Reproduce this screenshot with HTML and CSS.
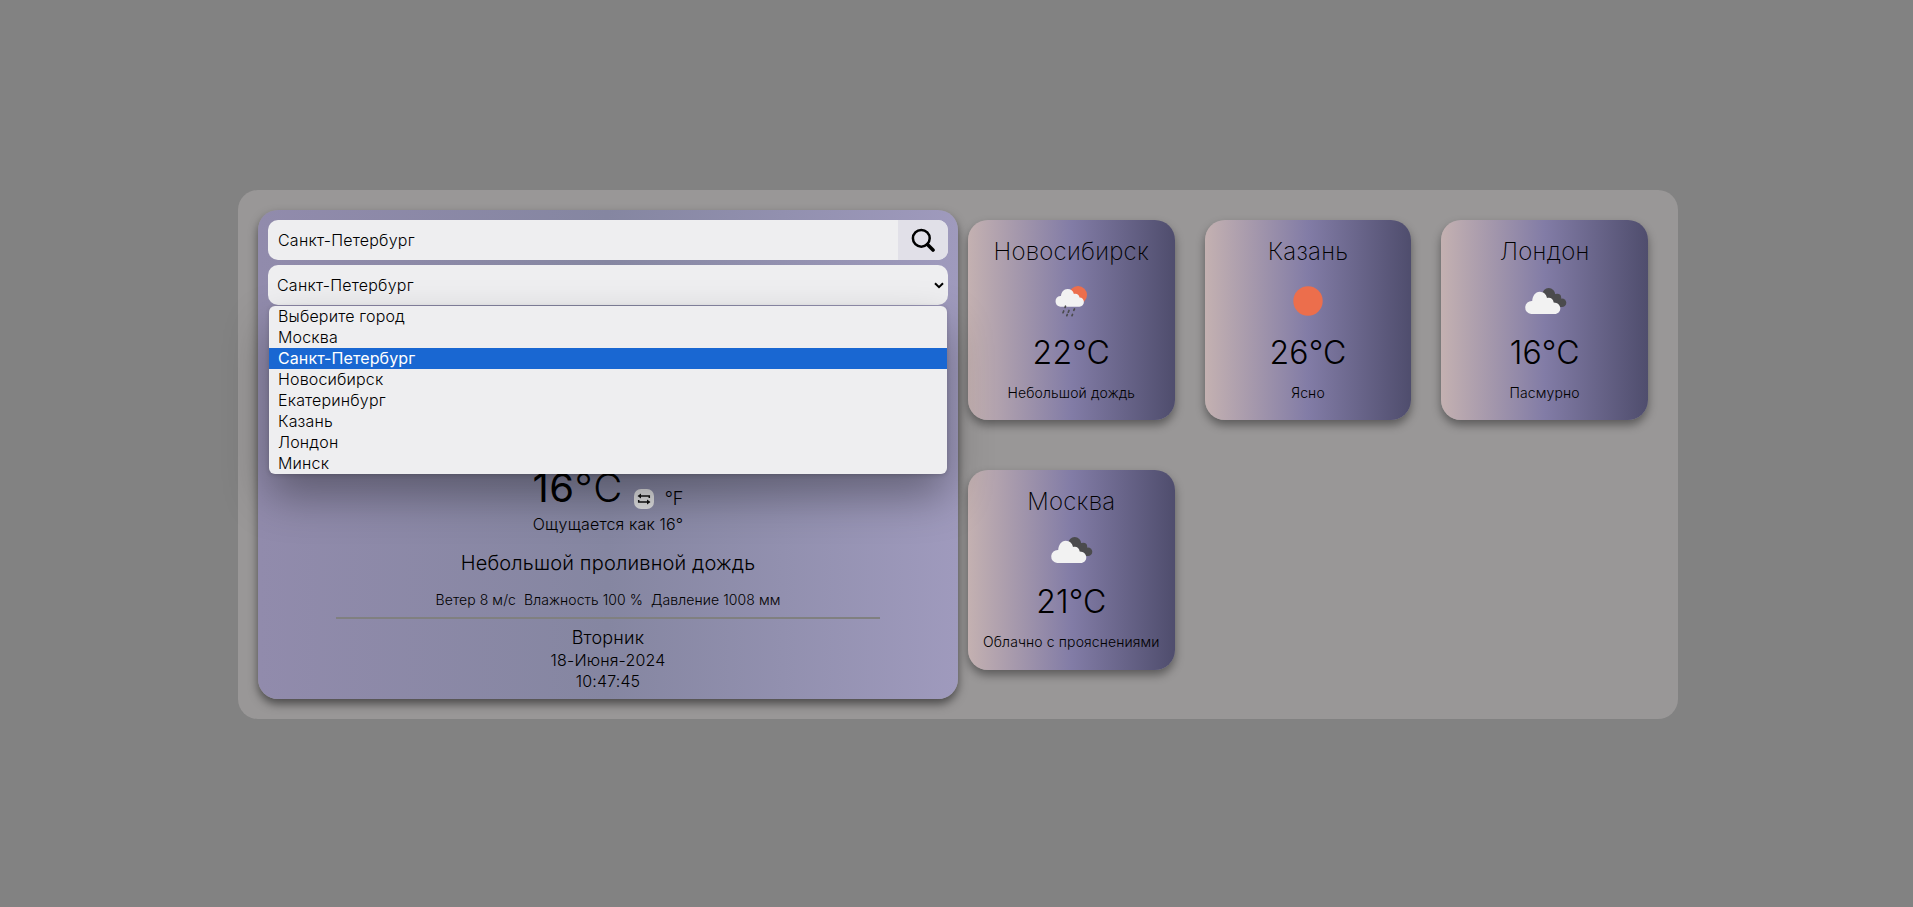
FILE: index.html
```html
<!DOCTYPE html>
<html lang="ru">
<head>
<meta charset="utf-8">
<title>Погода</title>
<link rel="stylesheet" href="styles.css">
</head>
<body>
<svg class="sprite" width="0" height="0">
  <symbol id="overcast" viewBox="0 0 48 48">
    <g fill="#4b4b4d"><circle cx="27.700" cy="17.500" r="6.500"/><circle cx="36.200" cy="20.700" r="4"/><circle cx="41" cy="25.700" r="4.300"/><path d="M24 20h12l5 10H30z"/></g>
    <path fill="#f2f2f2" d="M10.200 37a6.500 6.500 0 0 1 1-13c.3-4.700 3-9.200 7.500-9.200 4 0 6.700 2.800 7.300 6.300 3.200-1.300 6.200.8 6.700 4.400 4 .3 6.600 2.500 6.600 6 0 3-2.500 5.500-5.500 5.500z"/>
  </symbol>
  <symbol id="rain-sun" viewBox="0 0 48 48">
    <circle cx="31" cy="18" r="9" fill="#ec6e4c"/>
    <path fill="#f2f2f2" d="M13.300 29.800a5.500 5.500 0 0 1 0-10.900h.7c.3-3.900 2.900-6.900 6.500-6.900 3.200 0 5.700 1.800 6.400 5 2.700-.9 5.200.7 5.700 3.400 2.500 0 4.300 2 4.300 4.700s-1.900 4.700-4.500 4.700z"/>
    <g stroke="#4b4b4d" stroke-width="1.700" stroke-linecap="round"><path d="M18.500 29.200l-.4 1.200M16.700 34l-.7 1.700M22 33.500l-.7 1.700M27.500 31.900l-.7 1.400M20.300 37.500l-.5 1.200M25.500 37.500l-.5 1.200"/></g>
  </symbol>
  <symbol id="clear" viewBox="0 0 48 48"><circle cx="24" cy="24" r="14.700" fill="#ec6e4c"/></symbol>
</svg>
<main class="app">
  <section class="current">
    <form class="search">
      <span class="search-text">Санкт-Петербург</span>
      <button class="search-button" type="button" aria-label="Поиск">
        <svg width="24" height="24" viewBox="0 0 24 24" fill="none" stroke="#000"><circle cx="10.300" cy="10.300" r="8.400" stroke-width="2.500"/><path d="M16.500 16.500l5.500 5.500" stroke-width="3.600" stroke-linecap="round"/></svg>
      </button>
    </form>
    <div class="select">
      <span>Санкт-Петербург</span>
      <svg width="10" height="7" viewBox="0 0 10 7" fill="none" stroke="#000" stroke-width="2"><path d="M1 1.200l4 4 4-4"/></svg>
      <ul class="options">
        <li>Выберите город</li>
        <li>Москва</li>
        <li class="selected">Санкт-Петербург</li>
        <li>Новосибирск</li>
        <li>Екатеринбург</li>
        <li>Казань</li>
        <li>Лондон</li>
        <li>Минск</li>
      </ul>
    </div>
    <div class="weather">
      <div class="temperature">
        <span class="degrees">16</span><span class="unit">°C</span>
        <span class="swap"><svg width="14" height="12" viewBox="0 0 14 12" fill="none" stroke="#111" stroke-width="1.500"><path d="M12.300 5V3H2M1.700 7v2H12"/><path d="M4 .4L.5 3 4 5.600zM10 6.400L13.500 9 10 11.600z" fill="#111" stroke="none"/></svg></span>
        <span class="other-unit">°F</span>
      </div>
      <div class="feels">Ощущается как 16°</div>
      <div class="condition">Небольшой проливной дождь</div>
      <div class="details"><span>Ветер 8 м/с</span><span>Влажность 100 %</span><span>Давление 1008 мм</span></div>
      <div class="line"></div>
      <div class="day">Вторник</div>
      <div class="date">18-Июня-2024</div>
      <div class="date">10:47:45</div>
    </div>
  </section>
  <section class="cities">
    <article class="card"><h2>Новосибирск</h2><svg class="icon"><use href="#rain-sun"/></svg><p class="temp">22°C</p><p class="text">Небольшой дождь</p></article>
    <article class="card"><h2>Казань</h2><svg class="icon"><use href="#clear"/></svg><p class="temp">26°C</p><p class="text">Ясно</p></article>
    <article class="card"><h2>Лондон</h2><svg class="icon"><use href="#overcast"/></svg><p class="temp">16°C</p><p class="text">Пасмурно</p></article>
    <article class="card"><h2>Москва</h2><svg class="icon"><use href="#overcast"/></svg><p class="temp">21°C</p><p class="text">Облачно с прояснениями</p></article>
  </section>
</main>
</body>
</html>
```
FILE: styles.css
```css
* { box-sizing: border-box; margin: 0; padding: 0; letter-spacing: .01em; }
body {
  min-height: 907px;
  padding: 190px 0 0 238px;
  background: #828282;
  font-family: Inter, sans-serif;
  font-weight: 300;
  font-size: 16px;
  color: #000;
  overflow: hidden;
}
.sprite { position: absolute; }
.app {
  display: flex;
  width: 1440px;
  height: 528.7px;
  padding: 20px;
  border-radius: 20px;
  background: #999797;
}
.current {
  display: flex;
  flex-direction: column;
  gap: 5px;
  width: 700px;
  padding: 10px;
  border-radius: 20px;
  background: linear-gradient(to right, #918bac, #8586a1 50%, #9f9abd);
  box-shadow: 0 5px 10px rgba(0, 0, 0, .5);
}
.search, .select {
  display: flex;
  flex-shrink: 0;
  align-items: center;
  justify-content: space-between;
  height: 40px;
  border-radius: 10px;
  background: #eeeef0;
}
.search span, .select span { letter-spacing: .22px; }
.search { padding-left: 10px; overflow: hidden; }
.search-button {
  display: flex;
  align-items: center;
  justify-content: center;
  width: 50px;
  height: 40px;
  border: 0;
  background: #e1e0e8;
}
.select { position: relative; padding: 0 4px 0 9px; }
.options {
  position: absolute;
  top: 41px;
  left: 1px;
  right: 1px;
  border-radius: 6px;
  background: #eeeef0;
  list-style: none;
  box-shadow: 0 22px 44px rgba(0, 0, 0, .34), 0 1px 4px rgba(0, 0, 0, .16);
}
.options li { height: 21px; padding-left: 9px; line-height: 21px; }
.options .selected { background: #1967d2; color: #fff; font-weight: 400; letter-spacing: .1px; }
.weather {
  display: flex;
  flex-direction: column;
  align-items: center;
  padding-top: 152px;
}
.temperature { display: flex; align-items: baseline; height: 49px; line-height: 52px; }
.degrees { font-size: 40px; font-weight: 400; }
.unit { font-size: 40px; letter-spacing: .03em; }
.swap {
  display: flex;
  align-items: center;
  justify-content: center;
  align-self: flex-end;
  width: 20px;
  height: 20px;
  margin: 0 11px 2px 10px;
  border-radius: 7px;
  background: #dedee0;
}
.other-unit { position: relative; top: 3px; font-size: 18px; letter-spacing: 0; }
.feels { margin-top: 3px; line-height: 20px; }
.condition { margin-top: 16px; font-size: 20px; line-height: 26px; letter-spacing: .008em; }
.details { display: flex; gap: 8px; margin-top: 15px; font-size: 14px; line-height: 18px; }
.details span { letter-spacing: .006em; }
.line { width: 544px; height: 2px; margin: 8px 0 6px; background: #808080; }
.day { font-size: 18px; line-height: 25px; }
.date { line-height: 21px; }
.cities {
  display: grid;
  grid-template-columns: repeat(3, 1fr);
  grid-template-rows: 200px 200px;
  gap: 49.5px 30px;
  width: 700px;
  padding: 10px;
}
.card {
  display: flex;
  flex-direction: column;
  align-items: center;
  padding-top: 17px;
  border-radius: 20px;
  background: linear-gradient(to right, #c4b1b1, #827ca6 50%, #4f4d6d);
  box-shadow: 0 5px 10px rgba(0, 0, 0, .4);
}
.card h2 { font-size: 24px; font-weight: 250; line-height: 30px; }
.icon { width: 48px; height: 48px; margin-top: 9.8px; }
.temp { margin-top: 8.2px; font-size: 32px; line-height: 40px; letter-spacing: .005em; }
.text { margin-top: 10.8px; font-size: 14px; line-height: 18px; letter-spacing: .008em; }
```
